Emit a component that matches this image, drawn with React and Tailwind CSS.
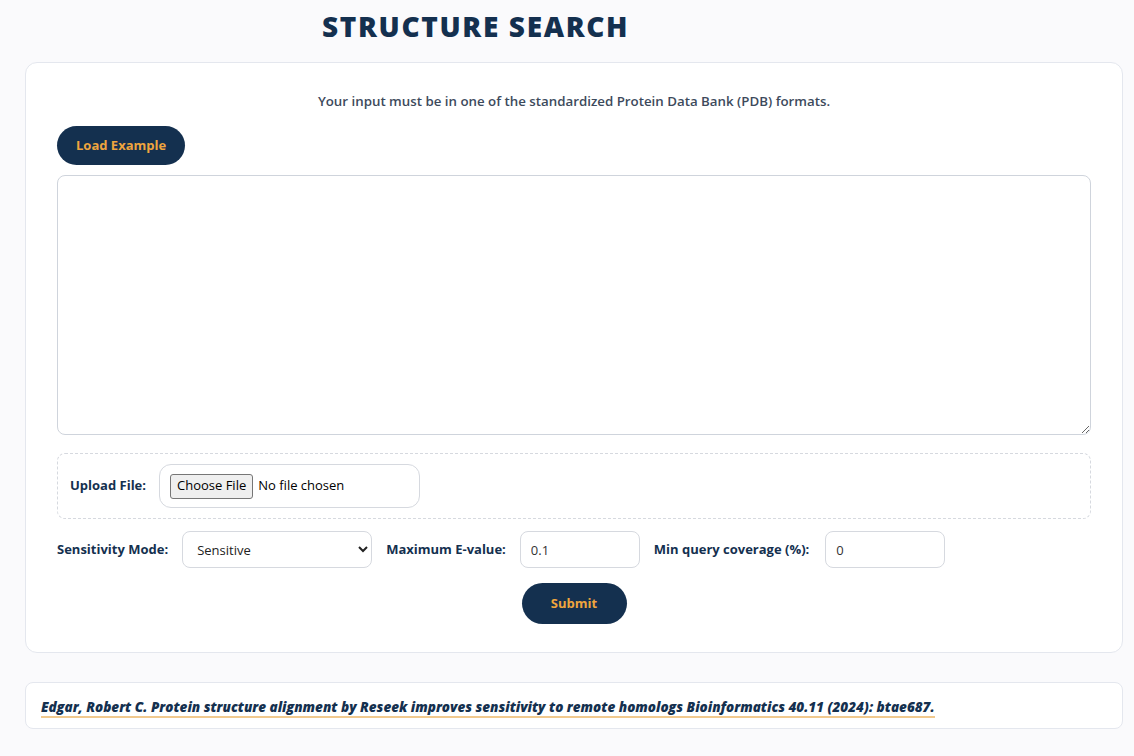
import { useState } from 'react';

const App = () => {
    const [pdbText, setPdbText] = useState('');
    const [mode, setMode] = useState('sensitive');
    const [evalue, setEvalue] = useState('0.1');
    const [coverage, setCoverage] = useState('0');

    const font = { fontFamily: '"Open Sans", "Noto Sans", sans-serif' };

    return (
        <div className="min-h-[756px] bg-[#fafafc] pb-6" style={font}>
            <div className="pl-[322px] pt-[9px] h-[62px]">
                <h1 className="text-[28px] leading-[34px] font-extrabold text-[#14304f] tracking-[1.65px]">
                    STRUCTURE SEARCH
                </h1>
            </div>

            <div className="ml-[25px] mr-[11px] bg-white border border-[#e4e7ee] rounded-xl pl-[31px] pr-[31px] pt-[28px] pb-[28px]">
                <p className="text-center text-[13.3px] leading-5 text-[#3d4a5c] font-semibold">
                    Your input must be in one of the standardized Protein Data Bank (PDB) formats.
                </p>

                <button className="mt-[15px] h-[39px] px-[19px] rounded-full bg-[#14304f] text-[#efa53e] text-[13px] font-bold">
                    Load Example
                </button>

                <textarea
                    className="mt-[10px] block w-full h-[260px] border border-[#cfd4dc] rounded-lg p-3 text-sm outline-none"
                    value={pdbText}
                    onChange={(e) => setPdbText(e.target.value)}
                />

                <div className="mt-[18px] h-[66px] border border-dashed border-[#d6d9df] rounded-lg flex items-center px-3 gap-[13px]">
                    <span className="text-[13px] font-bold text-[#14304f]">Upload File:</span>
                    <div className="w-[261px] h-[44px] border border-[#d6d9df] rounded-xl flex items-center px-[10px]">
                        <span className="border border-[#767676] bg-[#efefef] rounded-[3px] px-[6px] h-[25px] flex items-center text-[13px] text-black">
                            Choose File
                        </span>
                        <span className="ml-[5px] text-[13px] text-black">No file chosen</span>
                    </div>
                </div>

                <div className="mt-3 flex items-center">
                    <span className="text-[13px] font-bold text-[#14304f]">Sensitivity Mode:</span>
                    <select
                        className="ml-[14px] w-[190px] h-[37px] border border-[#d6d9df] rounded-lg px-[10px] text-[13px] text-[#222] bg-white"
                        value={mode}
                        onChange={(e) => setMode(e.target.value)}
                    >
                        <option value="sensitive">Sensitive</option>
                        <option value="fast">Fast</option>
                        <option value="veryfast">Very fast</option>
                    </select>
                    <span className="ml-[14px] text-[13px] font-bold text-[#14304f]">Maximum E-value:</span>
                    <input
                        type="text"
                        className="ml-[14px] w-[120px] h-[37px] border border-[#d6d9df] rounded-lg px-[10px] text-[13px] text-[#333] outline-none"
                        value={evalue}
                        onChange={(e) => setEvalue(e.target.value)}
                    />
                    <span className="ml-[14px] text-[13px] font-bold text-[#14304f]">Min query coverage (%):</span>
                    <input
                        type="text"
                        className="ml-[16px] w-[120px] h-[37px] border border-[#d6d9df] rounded-lg px-[10px] text-[13px] text-[#333] outline-none"
                        value={coverage}
                        onChange={(e) => setCoverage(e.target.value)}
                    />
                </div>

                <div className="mt-[15px] flex justify-center">
                    <button className="h-[41px] w-[105px] rounded-full bg-[#14304f] text-[#efa53e] text-[13px] font-bold">
                        Submit
                    </button>
                </div>
            </div>

            <div className="mt-[29px] ml-[25px] mr-[11px] bg-white border border-[#e4e7ee] rounded-lg h-[47px] flex items-center px-[15px]">
                <a className="mt-[4px] text-[13.5px] font-extrabold italic text-[#14304f] border-b-2 border-[#f1c98e] leading-[18px]">
                    Edgar, Robert C. Protein structure alignment by Reseek improves sensitivity to remote homologs Bioinformatics 40.11 (2024): btae687.
                </a>
            </div>
        </div>
    );
};

export default App;
